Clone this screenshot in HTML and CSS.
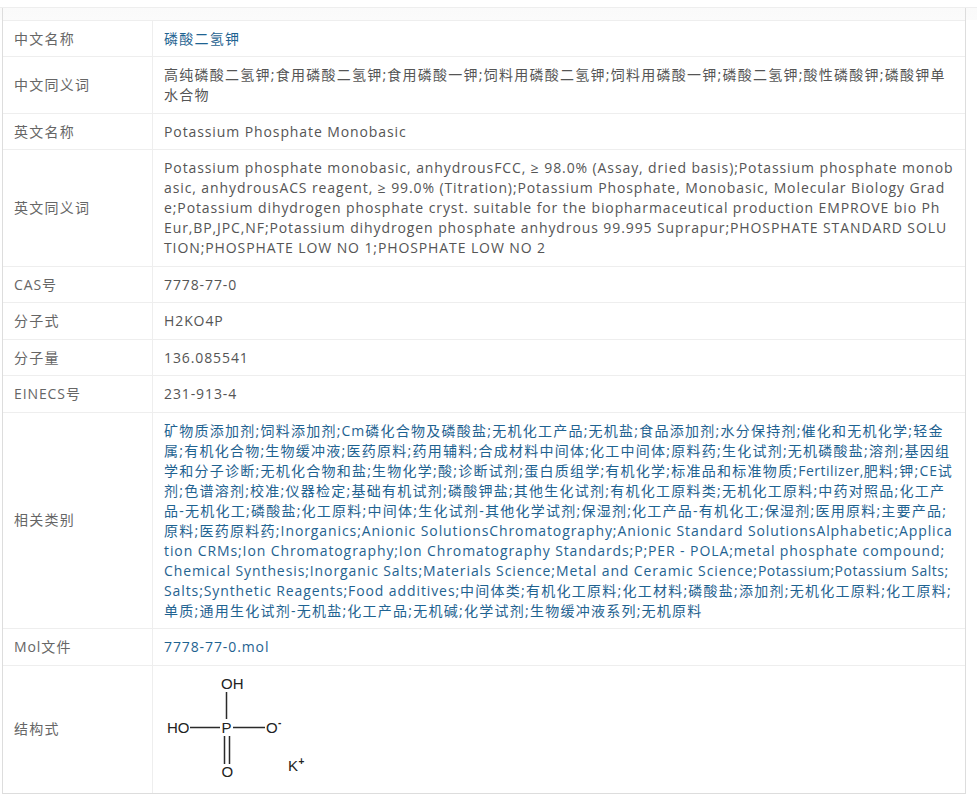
FILE: index.html
```html
<!DOCTYPE html>
<html lang="zh">
<head>
<meta charset="utf-8">
<title>磷酸二氢钾</title>
<link rel="stylesheet" href="styles.css">
</head>
<body>
<div class="panel">
<table class="info">
<tbody>
<tr><th>中文名称</th><td><a href="#">磷酸二氢钾</a></td></tr>
<tr><th>中文同义词</th><td>高纯磷酸二氢钾;食用磷酸二氢钾;食用磷酸一钾;饲料用磷酸二氢钾;饲料用磷酸一钾;磷酸二氢钾;酸性磷酸钾;磷酸钾单水合物</td></tr>
<tr><th>英文名称</th><td class="en">Potassium Phosphate Monobasic</td></tr>
<tr><th>英文同义词</th><td class="en">Potassium phosphate monobasic, anhydrousFCC, ≥ 98.0% (Assay, dried basis);Potassium phosphate monobasic, anhydrousACS reagent, ≥ 99.0% (Titration);Potassium Phosphate, Monobasic, Molecular Biology Grade;Potassium dihydrogen phosphate cryst. suitable for the biopharmaceutical production EMPROVE bio Ph <span class="keep">Eur,</span>BP,JPC,NF;Potassium dihydrogen phosphate anhydrous 99.995 Suprapur;PHOSPHATE STANDARD SOLU<span class="keep">TION;</span>PHOSPHATE LOW NO 1;PHOSPHATE LOW NO 2</td></tr>
<tr><th><span class="en">CAS</span>号</th><td class="en">7778-77-0</td></tr>
<tr><th>分子式</th><td class="en">H2KO4P</td></tr>
<tr><th>分子量</th><td class="en">136.085541</td></tr>
<tr><th><span class="en">EINECS</span>号</th><td class="en">231-913-4</td></tr>
<tr><th class="lift">相关类别</th><td><a href="#">矿物质添加剂;饲料添加剂;<span class="en">Cm</span>磷化合物及磷酸盐;无机化工产品;无机盐;食品添加剂;水分保持剂;催化和无机化学;轻金属;有机化合物;生物缓冲液;医药原料;药用辅料;合成材料中间体;化工中间体;原料药;生化试剂;无机磷酸盐;溶剂;基因组学和分子诊断;无机化合物和盐;生物化学;酸;诊断试剂;蛋白质组学;有机化学;标准品和标准物质;<span class="tight">Fertilizer,</span>肥料;钾;<span class="en">CE</span>试剂;色谱溶剂;校准;仪器检定;基础有机试剂;磷酸钾盐;其他生化试剂;有机化工原料类;无机化工原料;中药对照品;化工产品-无机化工;磷酸盐;化工原料;中间体;生化试剂-其他化学试剂;保湿剂;化工产品-有机化工;保湿剂;医用原料;主要产品;原料;医药原料药;<span class="en">Inorganics;Anionic SolutionsChromatography;Anionic Standard SolutionsAlphabetic;Application CRMs;Ion Chromatography;Ion Chromatography Standards;P;PER - POLA;metal phosphate compound;Chemical Synthesis;Inorganic Salts;Materials Science;Metal and Ceramic Science;</span><span class="tight">Potassium;Potassium Salts;</span><span class="en">Salts;Synthetic Reagents;Food additives;</span>中间体类;有机化工原料;化工材料;磷酸盐;添加剂;无机化工原料;化工原料;单质;通用生化试剂-无机盐;化工产品;无机碱;化学试剂;生物缓冲液系列;无机原料</a></td></tr>
<tr><th><span class="en">Mol</span>文件</th><td class="en"><a href="#">7778-77-0.mol</a></td></tr>
<tr><th class="lift">结构式</th><td class="structure">
<svg class="molecule" width="150" height="127" viewBox="0 0 150 127" role="img" aria-label="磷酸二氢钾结构式">
<path class="bonds" d="M62.500 26V53M26 61.500H56M69 61.500H101M60.500 70V98M65.500 70V98"/>
<text class="atom" x="57" y="23">OH</text>
<text class="atom" x="3" y="67">HO</text>
<text class="atom" x="57.500" y="67">P</text>
<text class="atom" x="102" y="67">O</text>
<text class="atom sup" x="114" y="60">-</text>
<text class="atom" x="57.500" y="111">O</text>
<text class="atom" x="124" y="105">K</text>
<text class="atom sup" x="134.500" y="99">+</text>
</svg>
</td></tr>
</tbody>
</table>
</div>
</body>
</html>
```
FILE: styles.css
```css
html, body {
  margin: 0;
  padding: 0;
  background: #fff;
}
body {
  padding-top: 7px;
  font-family: "Open Sans", "Noto Sans CJK SC", sans-serif;
  font-size: 14px;
  color: #555;
}
.panel {
  width: 977px;
  height: 798px;
  box-sizing: border-box;
  border-top: 1px solid #eee;
  background: linear-gradient(#fafafa, #fbfbfb 12px, #fff 12px);
}
.info {
  margin-left: 2px;
  width: 964px;
  table-layout: fixed;
  border-collapse: separate;
  border-spacing: 0;
  border: 1px solid #ddd;
  border-top: 0;
  padding-top: 11.75px;
  letter-spacing: 1.250px;
  line-height: 20px;
}
.info th, .info td {
  border-top: 1px solid #eee;
  padding: 8px 10.500px 7.500px 11px;
  word-break: break-all;
  vertical-align: middle;
  text-align: left;
  font-weight: 400;
}
.info th {
  width: 127.500px;
  border-right: 1px solid #eee;
  color: #666;
}
.info th.lift {
  padding-top: 7.500px;
  padding-bottom: 8px;
}
.info .en {
  letter-spacing: 0.900px;
}
.info .tight {
  letter-spacing: 0.500px;
}
.info .keep {
  white-space: nowrap;
}
.info a {
  color: #1f6391;
  text-decoration: none;
}
.info .structure {
  padding: 0 0 0 11px;
}
.molecule {
  display: block;
}
.bonds {
  fill: none;
  stroke: #2a2a2a;
  stroke-width: 1.500;
}
.atom {
  font-family: "Liberation Sans", sans-serif;
  font-size: 15px;
  letter-spacing: 0;
  fill: #222;
}
.sup {
  font-size: 10px;
  font-weight: 700;
}
```
